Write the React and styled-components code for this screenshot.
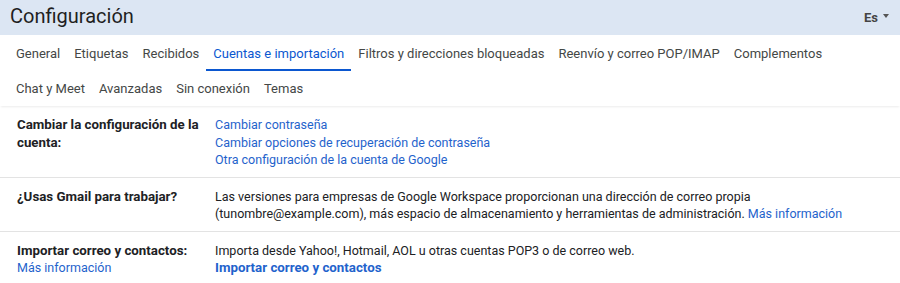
import React from "react";
import styled, { createGlobalStyle } from "styled-components";

const GlobalStyle = createGlobalStyle`
  body {
    margin: 0;
    background: #fff;
    font-family: Roboto, "Liberation Sans", Arial, sans-serif;
    color: #202124;
  }
`;

const Page = styled.div`
  width: 900px;
  height: 283px;
  overflow: hidden;
`;

const Header = styled.header`
  height: 35px;
  box-sizing: border-box;
  background: #dce6f3;
  display: flex;
  align-items: center;
  justify-content: space-between;
  padding: 0 11px 3px 10px;
`;

const Title = styled.h1`
  margin: 0;
  font-size: 20px;
  font-weight: 400;
  color: #1f1f1f;
`;

const Lang = styled.div`
  display: flex;
  align-items: center;
  gap: 5px;
  font-size: 13px;
  font-weight: 700;
  color: #444;
  margin-top: 3px;
`;

const Caret = styled.span`
  width: 0;
  height: 0;
  border-left: 3px solid transparent;
  border-right: 3px solid transparent;
  border-top: 4px solid #555;
  margin-top: -4px;
`;

const Tabs = styled.nav`
  display: flex;
  flex-wrap: wrap;
  padding: 1px 0 0 9px;
  box-shadow: 0 2px 2px -1px rgba(0, 0, 0, 0.08);
`;

const Tab = styled.a`
  padding: 2px 7px 0;
  height: 35px;
  display: flex;
  align-items: center;
  font-size: 13px;
  color: ${(p) => (p.$active ? "#0b57d0" : "#444746")};
  border-bottom: 2px solid ${(p) => (p.$active ? "#0b57d0" : "transparent")};
  box-sizing: border-box;
  cursor: pointer;
`;

const Section = styled.section`
  display: grid;
  grid-template-columns: 198px 1fr;
  padding: 10px 17px 8px;
  border-top: ${(p) => (p.$first ? "none" : "1px solid #e3e3e3")};
  font-size: 12.5px;
  line-height: 17.5px;
`;

const Label = styled.div`
  font-weight: 700;
  font-size: 13.3px;
  padding-right: 6px;
`;

const Value = styled.div`
  display: flex;
  flex-direction: column;
`;

const Link = styled.a`
  color: #1f63cc;
  font-weight: ${(p) => (p.$bold ? 700 : 400)};
  font-size: ${(p) => (p.$bold ? "13.3px" : "12.5px")};
  cursor: pointer;
`;

const tabs = [
  "General",
  "Etiquetas",
  "Recibidos",
  "Cuentas e importación",
  "Filtros y direcciones bloqueadas",
  "Reenvío y correo POP/IMAP",
  "Complementos",
  "Chat y Meet",
  "Avanzadas",
  "Sin conexión",
  "Temas",
];

export default function App() {
  return (
    <Page>
      <GlobalStyle />
      <Header>
        <Title>Configuración</Title>
        <Lang>
          Es <Caret />
        </Lang>
      </Header>
      <Tabs>
        {tabs.map((t) => (
          <Tab key={t} $active={t === "Cuentas e importación"}>
            {t}
          </Tab>
        ))}
      </Tabs>
      <Section $first>
        <Label>Cambiar la configuración de la cuenta:</Label>
        <Value>
          <Link>Cambiar contraseña</Link>
          <Link>Cambiar opciones de recuperación de contraseña</Link>
          <Link>Otra configuración de la cuenta de Google</Link>
        </Value>
      </Section>
      <Section>
        <Label>¿Usas Gmail para trabajar?</Label>
        <div>
          Las versiones para empresas de Google Workspace proporcionan una dirección de correo propia
          <br />
          (tunombre@example.com), más espacio de almacenamiento y herramientas de administración.{" "}
          <Link>Más información</Link>
        </div>
      </Section>
      <Section>
        <Label>
          Importar correo y contactos:
          <br />
          <Link>Más información</Link>
        </Label>
        <Value>
          <span>Importa desde Yahoo!, Hotmail, AOL u otras cuentas POP3 o de correo web.</span>
          <Link $bold>Importar correo y contactos</Link>
        </Value>
      </Section>
    </Page>
  );
}
